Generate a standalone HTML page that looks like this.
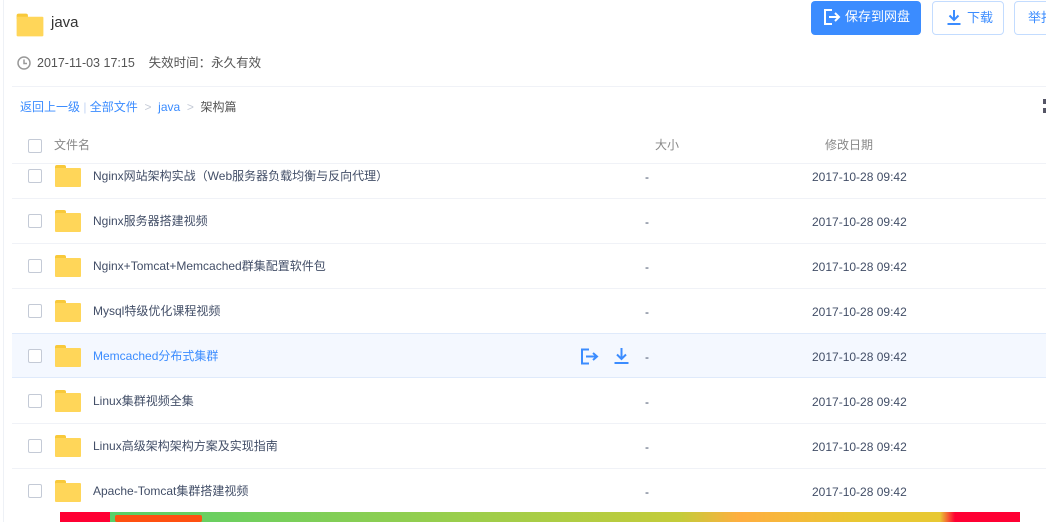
<!DOCTYPE html>
<html><head><meta charset="utf-8"><style>
*{margin:0;padding:0;box-sizing:border-box}
body{width:1046px;height:522px;overflow:hidden;background:#fff;font-family:"Liberation Sans","Noto Sans CJK SC",sans-serif;font-size:12px;color:#424e67;position:relative}
.a{position:absolute}
.t{position:absolute;line-height:16px;height:16px}
.fold{position:absolute;width:26px;height:22px}
.fold:before{content:"";position:absolute;left:0;top:0;width:11px;height:5px;background:#f8c93a;border-radius:2px 2px 0 0}
.fold:after{content:"";position:absolute;left:0;top:3px;width:26px;height:19px;background:#ffd659;border-radius:1px}
.cb{position:absolute;width:14px;height:14px;border:1px solid #c4cad6;border-radius:2px;background:#fff}
.line{position:absolute;left:12px;right:0;height:1px;background:#f0f2f7}
.btn{position:absolute;top:1px;height:34px;border-radius:4px;font-size:13px;line-height:32px}
</style></head><body>
<div class="a" style="left:3px;top:0;width:1px;height:522px;background:#eef1f6"></div>
<div class="fold" style="left:17px;top:14px;transform:scale(1.03)"></div>
<div class="a" style="left:51px;top:14px;font-size:15px;color:#333">java</div>
<svg class="a" style="left:17px;top:56px" width="14" height="14" viewBox="0 0 14 14"><circle cx="7" cy="7" r="6" fill="none" stroke="#999" stroke-width="1.5"/><path d="M7 3.5V7.5H10" fill="none" stroke="#999" stroke-width="1.5"/></svg>
<div class="t" style="left:37px;top:55px;color:#555;font-size:12.5px">2017-11-03 17:15&nbsp;&nbsp;&nbsp;&nbsp;失效时间：永久有效</div>
<div class="btn" style="left:811px;width:110px;background:#3b8cff;color:#fff">
<svg class="a" style="left:12px;top:8px" width="18" height="16" viewBox="0 0 18 16"><path d="M9 1H2V15H9" fill="none" stroke="#fff" stroke-width="2"/><path d="M6 8H16M12 4L16 8L12 12" fill="none" stroke="#fff" stroke-width="2"/></svg>
<span class="a" style="left:34px">保存到网盘</span></div>
<div class="btn" style="left:932px;width:72px;border:1px solid #c3dcff;color:#3b8cff">
<svg class="a" style="left:13px;top:7px" width="16" height="17" viewBox="0 0 16 17"><path d="M8 1V11M3.5 6.5L8 11L12.5 6.5M1.5 15H14.5" fill="none" stroke="#3b8cff" stroke-width="2"/></svg>
<span class="a" style="left:34px">下载</span></div>
<div class="btn" style="left:1014px;width:60px;border:1px solid #c3dcff;color:#3b8cff"><span class="a" style="left:13px">举报</span></div>
<div class="a" style="left:12px;right:0;top:86px;height:1px;background:#f0f2f7"></div>
<div class="t" style="left:20px;top:99px;color:#3b8cff">返回上一级 <span style="color:#c4d6f5">|</span> 全部文件 <span style="color:#c4cad6">&nbsp;&gt;&nbsp;</span> java <span style="color:#c4cad6">&nbsp;&gt;&nbsp;</span> <span style="color:#555">架构篇</span></div>
<div class="a" style="left:1043px;top:99px;width:3px;height:5px;background:#556"></div>
<div class="a" style="left:1043px;top:108px;width:3px;height:5px;background:#556"></div>
<div class="cb" style="left:28px;top:139px"></div>
<div class="t" style="left:54px;top:137px;color:#888">文件名</div>
<div class="t" style="left:655px;top:137px;color:#888">大小</div>
<div class="t" style="left:825px;top:137px;color:#888">修改日期</div>
<div class="line" style="top:163px"></div>
<div class="a" style="left:12px;right:0;top:333px;height:45px;background:#f4f8ff;border-top:1px solid #dfeafb;border-bottom:1px solid #dfeafb"></div>
<div id="rows"></div>
<svg class="a" style="left:580px;top:348px" width="20" height="17" viewBox="0 0 20 17"><path d="M9 1.5H2V15.5H9" fill="none" stroke="#3b8cff" stroke-width="2"/><path d="M6 8.5H17M13 5L17 8.5L13 12" fill="none" stroke="#3b8cff" stroke-width="2"/></svg>
<svg class="a" style="left:613px;top:347px" width="17" height="18" viewBox="0 0 17 18"><path d="M8.5 1V12M4 7.5L8.5 12L13 7.5M1.5 16H15.5" fill="none" stroke="#3b8cff" stroke-width="2"/></svg>
<div class="a" style="left:60px;top:512px;width:960px;height:10px;background:linear-gradient(90deg,#ff0033 0,#ff0033 50px,#57d068 50px,#c4cc3a 620px,#ffae40 680px,#e8c832 800px,#e8c832 880px,#ff0033 895px)"></div>
<div class="a" style="left:115px;top:515px;width:87px;height:7px;background:#ff5010;border-radius:2px"></div>
<script>
var names=["Nginx网站架构实战（Web服务器负载均衡与反向代理）","Nginx服务器搭建视频","Nginx+Tomcat+Memcached群集配置软件包","Mysql特级优化课程视频","Memcached分布式集群","Linux集群视频全集","Linux高级架构架构方案及实现指南","Apache-Tomcat集群搭建视频"];
var h="";
names.forEach(function(n,i){var c=176+45*i;var hl=i==4;
if(i!=3&&i!=4&&i<7)h+='<div class="line" style="top:'+(c+22)+'px"></div>';
h+='<div class="cb" style="left:28px;top:'+(c-7)+'px"></div><div class="fold" style="left:55px;top:'+(c-11)+'px"></div><div class="t" style="left:93px;top:'+(c-8)+'px;color:'+(hl?'#3b8cff':'#424e67')+'">'+n+'</div><div class="t" style="left:645px;top:'+(c-7)+'px">-</div><div class="t" style="left:812px;top:'+(c-7)+'px">2017-10-28 09:42</div>';});
document.getElementById("rows").innerHTML=h;
</script>
</body></html>
